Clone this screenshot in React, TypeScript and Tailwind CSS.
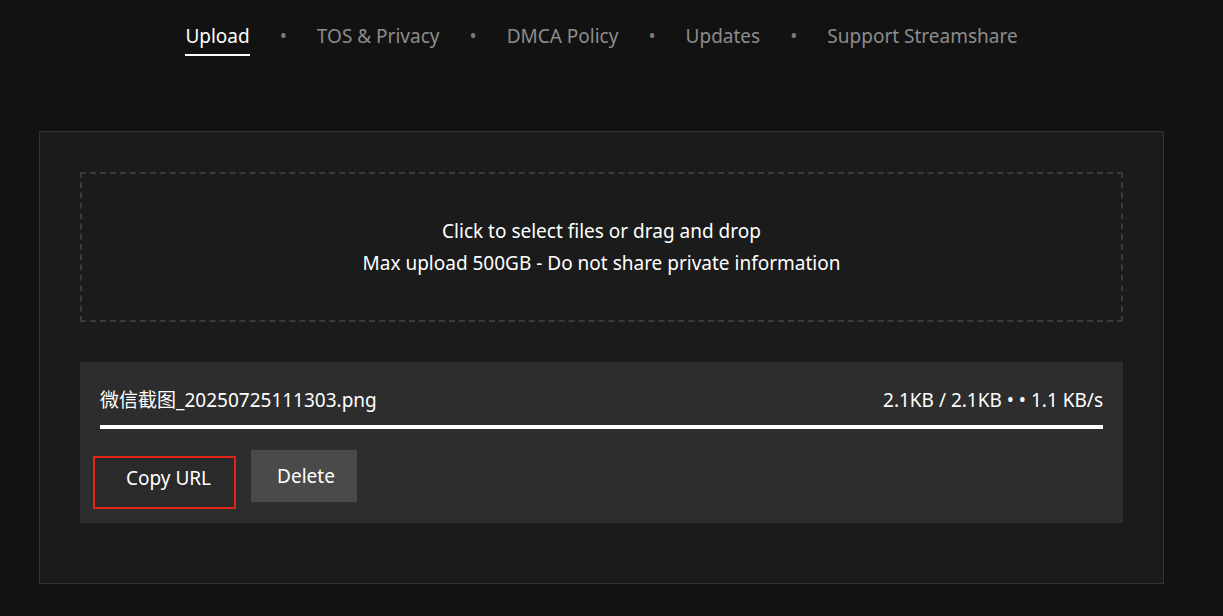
import React from 'react';

const links = ['Upload', 'TOS & Privacy', 'DMCA Policy', 'Updates', 'Support Streamshare'];

const font = { fontFamily: '"Segoe UI", "Noto Sans", "Noto Sans CJK SC", sans-serif' };

export default function App() {
  return (
    <div className="min-h-[616px] w-full bg-[#121212] text-white" style={font}>
      <nav className="flex w-[1203px] justify-center pt-[20px]">
        {links.map((label, i) => (
          <React.Fragment key={label}>
            {i > 0 && <span className="mx-[30px] text-[19px] leading-[32px] text-[#7a7a7a]">•</span>}
            <a
              className={
                i === 0
                  ? 'border-b-2 border-white pb-[2px] text-[19px] leading-[32px] text-white'
                  : 'pb-[4px] text-[19px] leading-[32px] text-[#8c8c8c]'
              }
            >
              {label}
            </a>
          </React.Fragment>
        ))}
      </nav>

      <main className="ml-[39px] mt-[75px] w-[1125px] border border-[#333333] bg-[#1b1b1b] px-[40px] pb-[60px] pt-[40px]">
        <div className="flex h-[150px] flex-col items-center justify-center border-2 border-dashed border-[#3a3a3a] text-[19px] leading-[32px] text-white">
          <p>Click to select files or drag and drop</p>
          <p>Max upload 500GB - Do not share private information</p>
        </div>

        <div className="mt-[40px] bg-[#2d2d2d] px-[20px] pb-[21px] pt-[20px]">
          <div className="flex items-center justify-between text-[19px] leading-[36px] text-white">
            <span>微信截图_20250725111303.png</span>
            <span>2.1KB / 2.1KB • • 1.1 KB/s</span>
          </div>
          <div className="mt-[7px] h-[4px] w-full bg-white" />
          <div className="mt-[21px] flex h-[52px] items-start">
            <button className="-ml-[7px] mt-[6px] h-[53px] w-[143px] shrink-0 border-2 border-[#e3241b] bg-[#2a2a2a] pb-[10px] pl-[8px] text-[19px] leading-[28px] text-white">
              Copy URL
            </button>
            <button className="ml-[15px] h-[52px] w-[106px] bg-[#4a4a4a] pl-[4px] text-[19px] leading-[28px] text-white">
              Delete
            </button>
          </div>
        </div>
      </main>
    </div>
  );
}
